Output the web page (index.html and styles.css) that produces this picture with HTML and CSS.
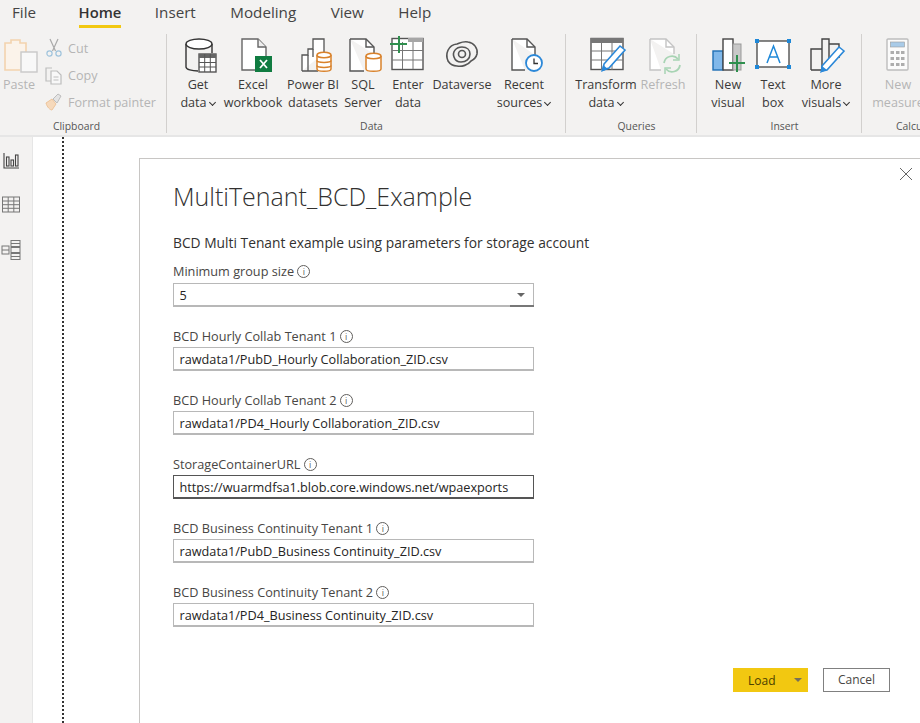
FILE: index.html
```html
<!DOCTYPE html>
<html>
<head>
  <title>MultiTenant_BCD_Example</title>
  <link rel="stylesheet" href="styles.css">
</head>
<body>
  <!-- Tabs -->
  <nav class="tabs">
    <span class="tab">File</span>
    <span class="tab tab-active">Home</span>
    <span class="tab">Insert</span>
    <span class="tab">Modeling</span>
    <span class="tab">View</span>
    <span class="tab">Help</span>
  </nav>

  <!-- Ribbon -->
  <div class="ribbon">
    <section class="group group-clipboard">
      <div class="group-items">
        <div class="btn btn-paste off">
          <svg class="icon" width="36" height="36" viewBox="0 0 36 36" fill="none">
            <path d="M19 33H4V6h6V3h9v3h6v9" stroke="#f3d3ae" stroke-width="1.600" fill="#fbf3ea"/>
            <rect x="20" y="15" width="16" height="20" fill="#f8f8f8" stroke="#c8c8c8" stroke-width="1.400"/>
          </svg>
          <span class="lbl">Paste</span>
        </div>
        <div class="small-btns">
          <div class="small-btn off">
            <svg width="18" height="20" viewBox="0 0 18 20" fill="none" stroke="#a9a9a9" stroke-width="1.200">
              <path d="M5 1l5.500 12M13 1L7.500 13"/>
              <circle cx="4.500" cy="15.500" r="2.600" stroke="#9fc3dc"/>
              <circle cx="13.500" cy="15.500" r="2.600" stroke="#9fc3dc"/>
            </svg>
            <span>Cut</span>
          </div>
          <div class="small-btn off">
            <svg width="18" height="20" viewBox="0 0 18 20" fill="none" stroke="#bdbdbd" stroke-width="1.200">
              <path d="M7 3H1v13h5"/>
              <path d="M6 6h6l4 4v9H6z" fill="#f8f8f8"/>
              <path d="M8.500 12h5M8.500 15h5"/>
            </svg>
            <span>Copy</span>
          </div>
          <div class="small-btn off">
            <svg width="18" height="20" viewBox="0 0 18 20" fill="none">
              <path d="M1 11l6-4 4 5-4 6c-2 0-5-3-6-7z" fill="#f6d9bb" stroke="#eec49a"/>
              <path d="M8 7l5-5 3 2-4 7z" fill="#e4e4e4" stroke="#bdbdbd"/>
            </svg>
            <span>Format painter</span>
          </div>
        </div>
      </div>
      <div class="group-name group-name-clip">Clipboard</div>
    </section>

    <section class="group group-data">
      <div class="group-items">
        <div class="btn w40">
          <svg class="icon" width="36" height="36" viewBox="0 0 36 36" fill="none">
            <path d="M6 7v23c0 2.500 6 4 12 4M32 7v9" stroke="#333" stroke-width="1.400"/>
            <ellipse cx="19" cy="7" rx="13" ry="5" fill="#fff" stroke="#333" stroke-width="1.400"/>
            <rect x="19" y="17" width="17" height="18" fill="#fff" stroke="#555" stroke-width="1.400"/>
            <path d="M19 21h17v-4H19z" fill="#666"/>
            <path d="M19 25.500h17M19 30h17M24.700 17v18M30.300 17v18" stroke="#555"/>
          </svg>
          <span class="lbl">Get</span>
          <span class="lbl">data<i class="chev"></i></span>
        </div>
        <div class="btn w70">
          <svg class="icon" width="36" height="36" viewBox="0 0 36 36" fill="none">
            <path d="M7 2h16l8 8v23H7z" fill="#fff" stroke="#666" stroke-width="1.400"/>
            <path d="M23 2v8h8" fill="#eee" stroke="#666" stroke-width="1.400"/>
            <rect x="20" y="19" width="17" height="16" fill="#107c41"/>
            <path d="M25 23l7 8M32 23l-7 8" stroke="#fff" stroke-width="1.800"/>
          </svg>
          <span class="lbl">Excel</span>
          <span class="lbl">workbook</span>
        </div>
        <div class="btn w50">
          <svg class="icon" width="36" height="36" viewBox="0 0 36 36" fill="none">
            <path d="M7 34V18h6v-6h5V2h11v14" fill="#fff" stroke="#555" stroke-width="1.300"/>
            <path d="M7 34h16M13 18v16M18 12v8" stroke="#555" stroke-width="1.300"/>
            <path d="M22 18v14c0 3 14 3 14 0V18" fill="#fff" stroke="#d9822b" stroke-width="1.500"/>
            <ellipse cx="29" cy="18" rx="7" ry="2.800" fill="#fff" stroke="#d9822b" stroke-width="1.500"/>
            <path d="M22 23.500c0 2.500 14 2.500 14 0M22 28.500c0 2.500 14 2.500 14 0" stroke="#d9822b" stroke-width="1.500"/>
          </svg>
          <span class="lbl">Power BI</span>
          <span class="lbl">datasets</span>
        </div>
        <div class="btn w50">
          <svg class="icon" width="36" height="36" viewBox="0 0 36 36" fill="none">
            <path d="M5 2h16l8 8v7M19 34H5V2" fill="#fff" stroke="#555" stroke-width="1.400"/>
            <path d="M21 2v8h8" stroke="#555" stroke-width="1.400"/>
            <path d="M21 19v13c0 3 15 3 15 0V19" fill="#fff" stroke="#d9822b" stroke-width="1.500"/>
            <ellipse cx="28.500" cy="19" rx="7.500" ry="2.800" fill="#fff" stroke="#d9822b" stroke-width="1.500"/>
          </svg>
          <span class="lbl">SQL</span>
          <span class="lbl">Server</span>
        </div>
        <div class="btn w40">
          <svg class="icon" width="36" height="36" viewBox="0 0 36 36" fill="none">
            <rect x="2" y="1.500" width="31" height="31" fill="#fff" stroke="#555" stroke-width="1.400"/>
            <rect x="18" y="1" width="15" height="4" fill="#a6a6a6"/>
            <path d="M2 13.500h31M2 23h31M12.500 5v27M23 5v27" stroke="#777"/>
            <path d="M9 -1v17M0 7h17" stroke="#2f8f4e" stroke-width="2"/>
          </svg>
          <span class="lbl">Enter</span>
          <span class="lbl">data</span>
        </div>
        <div class="btn w68">
          <svg class="icon" width="36" height="36" viewBox="0 0 36 36" fill="none" stroke="#555" stroke-width="1.600">
            <path d="M4 24C1 17 4 8 13 7c3-1 6-3 11-2 6 1 10 6 9 12-1 4-4 6-6 7-3 4-9 6-14 5-4 0-7-2-9-5z"/>
            <path d="M10 20c-2-5 2-10 8-10 5 0 8 3 8 7 0 5-4 8-9 8-3 0-6-2-7-5z"/>
            <circle cx="18" cy="17" r="3.500"/>
          </svg>
          <span class="lbl">Dataverse</span>
        </div>
        <div class="btn w56">
          <svg class="icon" width="36" height="36" viewBox="0 0 36 36" fill="none">
            <path d="M6 2h15l8 8v8M19 33H6V2" fill="#fff" stroke="#555" stroke-width="1.400"/>
            <path d="M21 2v8h8" stroke="#555" stroke-width="1.400"/>
            <circle cx="28" cy="26" r="8" fill="#fff" stroke="#2b88d8" stroke-width="1.800"/>
            <path d="M28 21.500V26.500h4" stroke="#333" stroke-width="1.300"/>
          </svg>
          <span class="lbl">Recent</span>
          <span class="lbl">sources<i class="chev"></i></span>
        </div>
      </div>
      <div class="group-name">Data</div>
    </section>

    <section class="group group-queries">
      <div class="group-items">
        <div class="btn w58">
          <svg class="icon" width="36" height="36" viewBox="0 0 36 36" fill="none">
            <rect x="3" y="1.500" width="32" height="31" fill="#fff" stroke="#555" stroke-width="1.400"/>
            <rect x="3" y="1" width="32" height="5" fill="#777"/>
            <path d="M3 14h32M3 23h32M13.500 6v27M24 6v27" stroke="#777"/>
            <path d="M16 27l16-18 5 4-16 18-6 2z" fill="#fff" stroke="#2b88d8" stroke-width="1.600"/>
            <path d="M13 35l2-7 5 4z" fill="#2b88d8"/>
          </svg>
          <span class="lbl">Transform</span>
          <span class="lbl">data<i class="chev"></i></span>
        </div>
        <div class="btn w44 off">
          <svg class="icon" width="36" height="36" viewBox="0 0 36 36" fill="none">
            <path d="M5 2h16l8 8v7M16 33H5V2" fill="#fff" stroke="#c4c4c4" stroke-width="1.400"/>
            <path d="M21 2v8h8" stroke="#c4c4c4" stroke-width="1.400"/>
            <path d="M19 26a8 8 0 0 1 14-4M35 28a8 8 0 0 1-14 4" stroke="#a8d4b4" stroke-width="1.800"/>
            <path d="M34 17v6h-6M20 37v-6h6" stroke="#a8d4b4" stroke-width="1.500"/>
          </svg>
          <span class="lbl">Refresh</span>
        </div>
      </div>
      <div class="group-name">Queries</div>
    </section>

    <section class="group group-insert">
      <div class="group-items">
        <div class="btn w40">
          <svg class="icon" width="36" height="36" viewBox="0 0 36 36" fill="none">
            <rect x="3" y="14" width="10" height="19" fill="#80b8ea" stroke="#1f6fb5" stroke-width="1.400"/>
            <rect x="13" y="2" width="10" height="31" fill="#fff" stroke="#444" stroke-width="1.400"/>
            <rect x="23" y="7" width="8" height="26" fill="#c8c8c8" stroke="#999"/>
            <path d="M27 18v17M19 26h16" stroke="#2f8f4e" stroke-width="2"/>
          </svg>
          <span class="lbl">New</span>
          <span class="lbl">visual</span>
        </div>
        <div class="btn w40">
          <svg class="icon" width="36" height="36" viewBox="0 0 36 36" fill="none">
            <rect x="2" y="4" width="32" height="26" fill="#fff" stroke="#444" stroke-width="1.300"/>
            <rect x="0" y="2" width="4" height="4" fill="#1e88d8"/>
            <rect x="32" y="2" width="4" height="4" fill="#1e88d8"/>
            <rect x="0" y="28" width="4" height="4" fill="#1e88d8"/>
            <rect x="32" y="28" width="4" height="4" fill="#1e88d8"/>
            <path d="M12 26l6.500-17 6.500 17M14.500 20h8" stroke="#1e88d8" stroke-width="1.500"/>
          </svg>
          <span class="lbl">Text</span>
          <span class="lbl">box</span>
        </div>
        <div class="btn w56">
          <svg class="icon" width="36" height="36" viewBox="0 0 36 36" fill="none">
            <path d="M3 33V12h11V2h7v5h10v14M3 33h13M14 12v21M21 7v18" stroke="#444" stroke-width="1.400"/>
            <path d="M14 29l17-19 5 4-17 19-5 1z" fill="#fff" stroke="#2b88d8" stroke-width="1.600"/>
            <path d="M12 36l2-7 5 4z" fill="#2b88d8"/>
          </svg>
          <span class="lbl">More</span>
          <span class="lbl">visuals<i class="chev"></i></span>
        </div>
      </div>
      <div class="group-name">Insert</div>
    </section>

    <section class="group group-calc">
      <div class="group-items">
        <div class="btn w52 off">
          <svg class="icon" width="36" height="36" viewBox="0 0 36 36" fill="none">
            <rect x="7" y="2" width="21" height="31" rx="1" fill="#fbfbfb" stroke="#bdbdbd" stroke-width="1.400"/>
            <rect x="10.500" y="5" width="14" height="5" fill="#a9cbe8" stroke="#9a9a9a" stroke-width=".6"/>
            <g fill="#adadad">
              <rect x="10.500" y="14" width="3.500" height="3"/><rect x="16" y="14" width="3.500" height="3"/><rect x="21" y="14" width="3.500" height="3"/>
              <rect x="10.500" y="20" width="3.500" height="3"/><rect x="16" y="20" width="3.500" height="3"/><rect x="21" y="20" width="3.500" height="3"/>
              <rect x="10.500" y="26" width="3.500" height="3"/><rect x="16" y="26" width="3.500" height="3"/><rect x="21" y="26" width="3.500" height="3"/>
            </g>
          </svg>
          <span class="lbl">New</span>
          <span class="lbl">measure</span>
        </div>
      </div>
      <div class="group-name group-name-calc">Calculations</div>
    </section>
  </div>

  <div class="main">
    <!-- Left rail -->
    <aside class="rail">
      <svg width="17" height="17" viewBox="0 0 17 17" fill="none" stroke="#444" stroke-width="1.100">
        <path d="M1 1v15h15"/>
        <rect x="3.500" y="5" width="2.500" height="9"/>
        <rect x="8" y="8" width="2.500" height="6"/>
        <rect x="12.500" y="3" width="2.500" height="11"/>
      </svg>
      <svg width="18" height="17" viewBox="0 0 18 17" fill="none" stroke="#777" stroke-width="1">
        <rect x=".5" y="1" width="17" height="15"/>
        <path d="M.5 5h17M.5 8.700h17M.5 12.300h17M6.200 1v15M11.800 1v15"/>
      </svg>
      <svg width="20" height="20" viewBox="0 0 20 20" fill="none" stroke="#777" stroke-width="1">
        <rect x="1" y="6" width="7" height="8"/>
        <rect x="10" y=".5" width="9" height="6"/>
        <rect x="10" y="7.500" width="9" height="5"/>
        <rect x="10" y="13.500" width="9" height="6"/>
        <path d="M1 10h7M10 3.500h9M10 16.500h9"/>
      </svg>
    </aside>

    <div class="canvas">
      <div class="page-edge"></div>
      <div class="dialog">
        <svg class="close" width="14" height="14" viewBox="0 0 14 14" stroke="#666" stroke-width="1">
          <path d="M1 1l12 12M13 1L1 13"/>
        </svg>
        <h1 class="title">MultiTenant_BCD_Example</h1>
        <p class="desc">BCD Multi Tenant example using parameters for storage account</p>

        <div class="field field-first">
          <label class="field-label">Minimum group size <i class="info">i</i></label>
          <div class="input select">5<span class="select-arrow"></span></div>
        </div>
        <div class="field">
          <label class="field-label">BCD Hourly Collab Tenant 1 <i class="info">i</i></label>
          <div class="input">rawdata1/PubD_Hourly Collaboration_ZID.csv</div>
        </div>
        <div class="field">
          <label class="field-label">BCD Hourly Collab Tenant 2 <i class="info">i</i></label>
          <div class="input">rawdata1/PD4_Hourly Collaboration_ZID.csv</div>
        </div>
        <div class="field">
          <label class="field-label">StorageContainerURL <i class="info">i</i></label>
          <div class="input input-focus">https://wuarmdfsa1.blob.core.windows.net/wpaexports</div>
        </div>
        <div class="field">
          <label class="field-label">BCD Business Continuity Tenant 1 <i class="info">i</i></label>
          <div class="input">rawdata1/PubD_Business Continuity_ZID.csv</div>
        </div>
        <div class="field">
          <label class="field-label">BCD Business Continuity Tenant 2 <i class="info">i</i></label>
          <div class="input">rawdata1/PD4_Business Continuity_ZID.csv</div>
        </div>

        <div class="actions">
          <div class="load"><span class="load-text">Load</span><span class="load-arrow"></span></div>
          <div class="cancel">Cancel</div>
        </div>
      </div>
    </div>
  </div>
</body>
</html>
```

FILE: styles.css
```css
html, body {
  margin: 0;
  height: 723px;
  overflow: hidden;
}
body {
  display: flex;
  flex-direction: column;
  background-color: #ffffff;
  color: #323130;
  font-family: "Open Sans", "Noto Sans", sans-serif;
}

/* Tabs */
.tabs {
  display: flex;
  height: 32px;
  padding-left: 12px;
  gap: 34.500px;
  background-color: #f3f2f1;
  flex: none;
}
.tab {
  height: 25px;
  line-height: 25px;
  font-size: 15.200px;
  color: #444;
}
.tab-active {
  margin-left: 8px;
  margin-right: -1px;
  border-bottom: 3px solid #f2c811;
  font-size: 14.800px;
  font-weight: 600;
  color: #333;
}

/* Ribbon */
.ribbon {
  display: flex;
  height: 103px;
  flex: none;
  background-color: #f3f2f1;
  border-bottom: 2px solid #e6e6e6;
  overflow: hidden;
}
.group {
  display: flex;
  flex-direction: column;
  flex: none;
  box-sizing: border-box;
  margin: 2px 0 2px;
  border-right: 1px solid #d2d0ce;
}
.group-items {
  display: flex;
  height: 87px;
}
.group-name {
  font-size: 10.400px;
  line-height: 14px;
  text-align: center;
  color: #555;
  white-space: nowrap;
}
.group-name-clip {
  padding-right: 13px;
}
.group-name-calc {
  text-align: left;
  padding-left: 24px;
}
.group-clipboard { width: 167px; }
.group-data { width: 399px; padding-left: 11px; }
.group-queries { width: 131px; padding-left: 11px; }
.group-insert { width: 165px; padding-left: 11px; }
.group-calc { width: 58px; padding-left: 10px; border-right: 0; }
.group-queries .group-items { gap: 6px; }
.group-insert .group-items { gap: 5px; }

.btn {
  display: flex;
  flex-direction: column;
  align-items: center;
  flex: none;
  padding-top: 3px;
  box-sizing: border-box;
}
.btn .icon {
  margin-bottom: 3px;
  flex: none;
  overflow: visible;
}
.lbl {
  font-size: 12.600px;
  line-height: 18px;
  white-space: nowrap;
  color: #3b3a39;
}
.off .lbl, .off span {
  color: #b5b5b5;
}
.w40 { width: 40px; }
.w44 { width: 44px; }
.w50 { width: 50px; }
.w52 { width: 52px; }
.w56 { width: 56px; }
.w58 { width: 58px; }
.w68 { width: 68px; }
.w70 { width: 70px; }
.chev {
  display: inline-block;
  width: 4px;
  height: 4px;
  margin: 0 1px 2px 3px;
  border-right: 1.400px solid #333;
  border-bottom: 1.400px solid #333;
  transform: rotate(45deg);
}
.btn-paste {
  width: 38px;
  margin-right: 7px;
}
.small-btns {
  display: flex;
  flex-direction: column;
  padding-top: 4px;
  gap: 7px;
}
.small-btn {
  display: flex;
  align-items: center;
  gap: 5px;
  height: 20px;
  font-size: 12.600px;
  white-space: nowrap;
}
.small-btn svg {
  flex: none;
}

/* Main area */
.main {
  display: flex;
  flex: 1;
  min-height: 0;
}
.rail {
  display: flex;
  flex-direction: column;
  align-items: center;
  width: 22px;
  padding: 15px 10px 0 0;
  gap: 27px;
  flex: none;
  background-color: #f3f2f1;
  border-right: 1px solid #e6e6e6;
}
.canvas {
  display: flex;
  flex: 1;
  min-width: 0;
  padding-left: 29px;
}
.page-edge {
  width: 0;
  flex: none;
  border-left: 2px dotted #333;
}

/* Dialog */
.dialog {
  position: relative;
  flex: 1;
  margin: 21px 0 0 75px;
  padding: 21px 30px 0 33px;
  border-top: 1px solid #c8c6c4;
  border-left: 1px solid #c8c6c4;
}
.close {
  position: absolute;
  top: 8px;
  right: 7px;
}
.title {
  margin: 0;
  font-size: 25px;
  font-weight: 300;
  line-height: 32px;
  color: #323130;
}
.desc {
  margin: 21px 0 0;
  font-size: 13.800px;
  line-height: 20px;
}
.field {
  width: 361px;
  margin-top: 20px;
}
.field-first {
  margin-top: 9px;
}
.field-label {
  display: block;
  font-size: 12.700px;
  line-height: 18px;
  height: 18px;
  color: #484644;
  white-space: nowrap;
}
.info {
  display: inline-block;
  width: 11px;
  height: 11px;
  border: 1px solid #605e5c;
  border-radius: 50%;
  font-size: 9px;
  font-style: normal;
  line-height: 11px;
  text-align: center;
  vertical-align: 1px;
  color: #605e5c;
}
.input {
  height: 24px;
  margin-top: 2px;
  padding-left: 5.500px;
  box-sizing: border-box;
  border: 1px solid #b8b8b8;
  border-bottom-width: 2px;
  font-size: 12.700px;
  line-height: 22px;
  color: #252423;
  white-space: nowrap;
}
.field-first .input {
  margin-top: 3px;
}
.input-focus {
  border: 1px solid #555;
  border-bottom-width: 2px;
}
.select {
  position: relative;
}
.select::after {
  content: "";
  position: absolute;
  right: -1px;
  bottom: -2px;
  width: 24px;
  height: 2px;
  background-color: #777;
}
.select-arrow {
  position: absolute;
  top: 9px;
  right: 8px;
  border-left: 4px solid transparent;
  border-right: 4px solid transparent;
  border-top: 4px solid #666;
}
.actions {
  display: flex;
  justify-content: flex-end;
  gap: 15px;
  margin-top: 41px;
}
.load {
  display: flex;
  align-items: center;
  width: 75px;
  height: 24px;
  background-color: #f2c811;
  font-size: 12px;
  color: #4a4000;
}
.load-text {
  margin-left: 15px;
  flex: 1;
}
.load-arrow {
  width: 0;
  margin-right: 6px;
  border-left: 4px solid transparent;
  border-right: 4px solid transparent;
  border-top: 4px solid #77705a;
}
.cancel {
  width: 67px;
  height: 24px;
  box-sizing: border-box;
  border: 1px solid #808080;
  font-size: 12px;
  line-height: 22px;
  text-align: center;
  color: #484644;
}
```
